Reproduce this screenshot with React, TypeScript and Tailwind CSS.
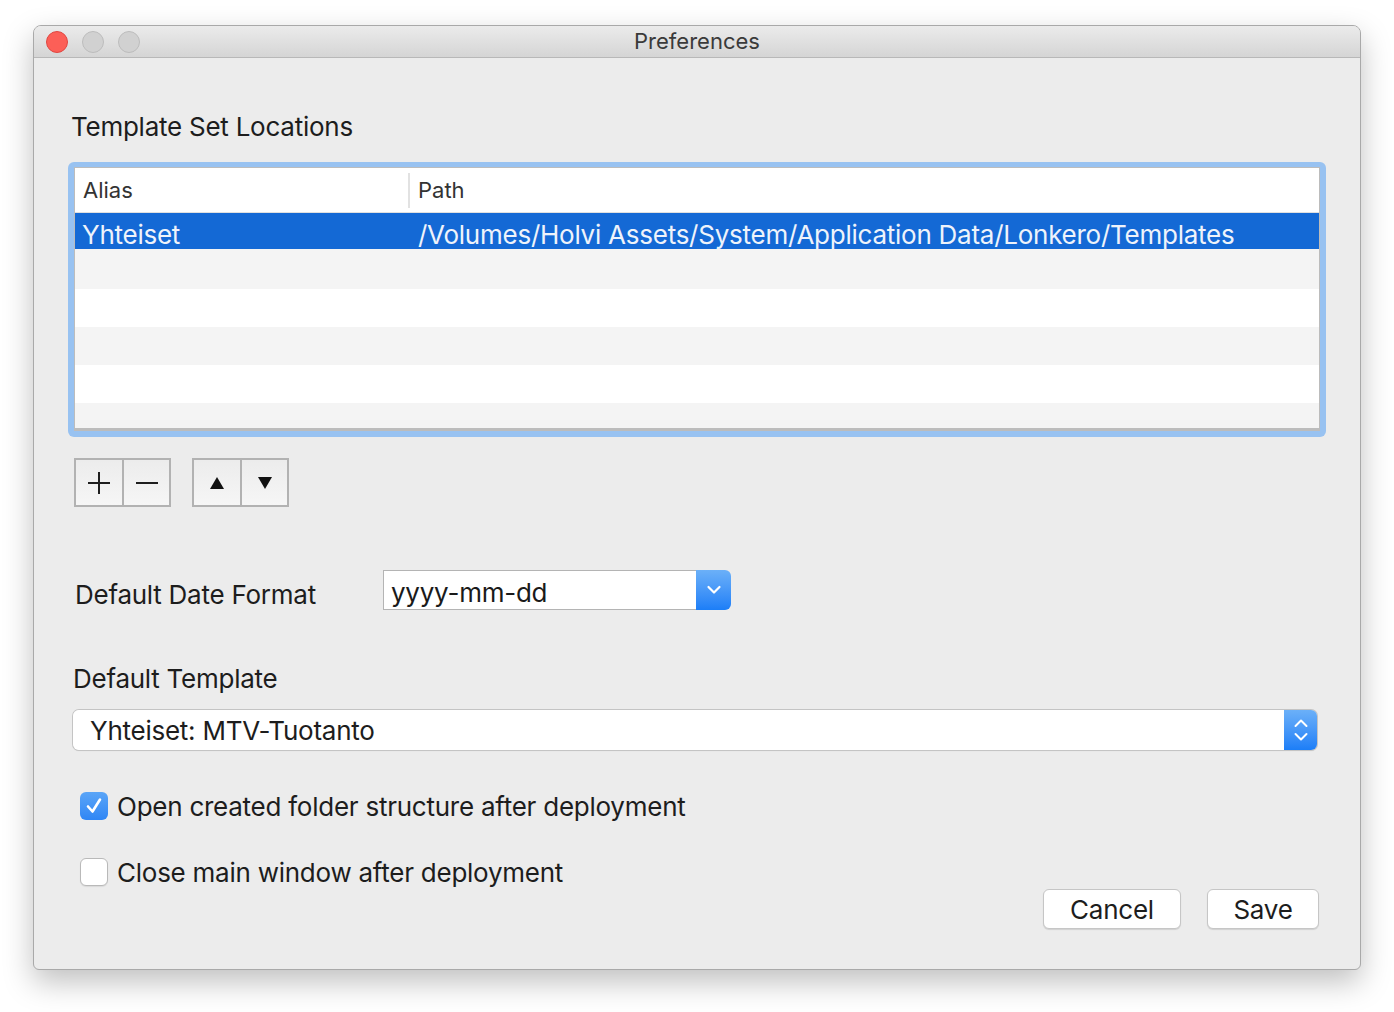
import React from 'react';

const font = { fontFamily: 'Inter, "Liberation Sans", sans-serif' };

function ChevronDown() {
  return (
    <svg width="16" height="12" viewBox="0 0 16 12">
      <path d="M2.5 3 L8 8.5 L13.5 3" fill="none" stroke="white" strokeWidth="2.2" strokeLinecap="round" strokeLinejoin="round" />
    </svg>
  );
}

function UpDown() {
  return (
    <svg width="16" height="26" viewBox="0 0 16 26">
      <path d="M2.5 9 L8 3.5 L13.5 9" fill="none" stroke="white" strokeWidth="2" strokeLinecap="round" strokeLinejoin="round" />
      <path d="M2.5 17 L8 22.5 L13.5 17" fill="none" stroke="white" strokeWidth="2" strokeLinecap="round" strokeLinejoin="round" />
    </svg>
  );
}

function Light({ red }: { red?: boolean }) {
  return (
    <div
      className={
        red
          ? 'w-[22px] h-[22px] rounded-full bg-[#fc5f57] border border-[#df4741]'
          : 'w-[22px] h-[22px] rounded-full bg-[#d1d1d1] border border-[#bcbcbc]'
      }
    />
  );
}

function SegButton({ children, first }: { children: React.ReactNode; first?: boolean }) {
  return (
    <div
      className={
        'h-full flex items-center justify-center bg-gradient-to-b from-[#ececec] to-[#f6f6f6] ' +
        (first ? 'w-[48px] border-r-2 border-[#b2b2b2]' : 'w-[45px]')
      }
    >
      {children}
    </div>
  );
}

const rows = ['bg-[#f4f4f4] h-[40px]', 'bg-white h-[38px]', 'bg-[#f4f4f4] h-[38px]', 'bg-white h-[38px]', 'bg-[#f4f4f4] h-[26px]'];

export default function App() {
  return (
    <div className="min-h-screen bg-white pt-[25px] pl-[33px] text-[#1d1d1d]" style={font}>
      <div className="w-[1328px] h-[945px] rounded-t-[8px] rounded-b-[6px] border border-[#a9a9a9] bg-[#ececec] shadow-[0_12px_30px_rgba(0,0,0,0.25)] overflow-hidden flex flex-col">
        {/* title bar */}
        <div className="relative h-[32px] shrink-0 bg-gradient-to-b from-[#ebebeb] to-[#d5d5d5] border-b border-[#b8b8b8] flex items-center pl-[12px] gap-[14px]">
          <Light red />
          <Light />
          <Light />
          <div className="absolute inset-0 flex items-center justify-center text-[22px] text-[#3a3a3a]">Preferences</div>
        </div>

        <div className="px-[34px] pt-[53px] flex flex-col tracking-[-0.25px]">
          <div className="ml-[3px] text-[26px] leading-[31px]">Template Set Locations</div>

          {/* table */}
          <div className="mt-[20px] h-[275px] rounded-[6px] bg-[#98c2f1] p-[6px] pt-[5px]">
            <div className="h-full border border-[#bcbcbc] border-b-[3px] bg-white flex flex-col overflow-hidden">
              <div className="h-[45px] shrink-0 flex items-center border-b border-[#e0e0e0] text-[22px] text-[#333] tracking-normal">
                <div className="w-[335px] h-[35px] pl-[8px] flex items-center border-r-2 border-[#e2e2e2]">Alias</div>
                <div className="pl-[8px]">Path</div>
              </div>
              <div className="h-[36px] shrink-0 flex items-center pt-[7px] bg-[#1469d5] text-[26px] text-[#eef3fb]">
                <div className="w-[336px] pl-[7px]">Yhteiset</div>
                <div className="pl-[7px]">/Volumes/Holvi Assets/System/Application Data/Lonkero/Templates</div>
              </div>
              {rows.map((r, i) => (
                <div key={i} className={'shrink-0 ' + r} />
              ))}
            </div>
          </div>

          {/* +/- and arrows */}
          <div className="mt-[21px] ml-[6px] flex gap-[21px]">
            <div className="h-[49px] flex border-2 border-[#b2b2b2]">
              <SegButton first>
                <svg width="24" height="24" viewBox="0 0 24 24">
                  <path d="M12 1 V23 M1 12 H23" stroke="#1e1e1e" strokeWidth="2" />
                </svg>
              </SegButton>
              <SegButton>
                <svg width="24" height="24" viewBox="0 0 24 24">
                  <path d="M1 12 H23" stroke="#1e1e1e" strokeWidth="2" />
                </svg>
              </SegButton>
            </div>
            <div className="h-[49px] flex border-2 border-[#b2b2b2]">
              <SegButton first>
                <svg width="16" height="14" viewBox="0 0 16 14">
                  <path d="M8 1 L15 13 H1 Z" fill="#111" />
                </svg>
              </SegButton>
              <SegButton>
                <svg width="16" height="14" viewBox="0 0 16 14">
                  <path d="M1 1 H15 L8 13 Z" fill="#111" />
                </svg>
              </SegButton>
            </div>
          </div>

          {/* date format */}
          <div className="mt-[63px] ml-[7px] flex items-start">
            <div className="w-[308px] mt-[9px] leading-[31px] text-[26px]">Default Date Format</div>
            <div className="flex h-[40px] w-[348px]">
              <div className="flex-1 bg-white border border-[#b4b4b4] border-r-0 flex items-center pl-[7px] pt-[4px] text-[26px] text-[#1a1a1a]">yyyy-mm-dd</div>
              <div className="w-[35px] rounded-r-[6px] bg-gradient-to-b from-[#6bb0f8] to-[#1b7ef7] flex items-center justify-center">
                <ChevronDown />
              </div>
            </div>
          </div>

          {/* default template */}
          <div className="mt-[53px] ml-[5px] text-[26px] leading-[31px]">Default Template</div>
          <div className="mt-[16px] ml-[5px] w-[1244px] h-[40px] flex rounded-[6px] shadow-[0_0_0_1px_#c4c4c4,0_1px_1px_rgba(0,0,0,0.15)]">
            <div className="flex-1 bg-white rounded-l-[6px] flex items-center pl-[17px] text-[26px]">Yhteiset: MTV-Tuotanto</div>
            <div className="w-[33px] rounded-r-[6px] bg-gradient-to-b from-[#6bb0f8] to-[#1b7ef7] flex items-center justify-center">
              <UpDown />
            </div>
          </div>

          {/* checkboxes + buttons */}
          <div className="mt-[42px] flex justify-between">
            <div className="ml-[12px] flex flex-col gap-[38px]">
              <div className="flex items-center gap-[9px] h-[28px]">
                <div className="w-[28px] h-[28px] rounded-[6px] bg-gradient-to-b from-[#5aa5f7] to-[#2f86f5] flex items-center justify-center">
                  <svg width="20" height="20" viewBox="0 0 20 20">
                    <path d="M4 10.5 L8.5 15.5 L16 3.5" fill="none" stroke="white" strokeWidth="2.6" strokeLinecap="round" strokeLinejoin="round" />
                  </svg>
                </div>
                <span className="text-[26px]">Open created folder structure after deployment</span>
              </div>
              <div className="flex items-center gap-[9px] h-[28px]">
                <div className="w-[28px] h-[28px] rounded-[6px] bg-white border border-[#b9b9b9] shadow-[0_1px_1px_rgba(0,0,0,0.08)]" />
                <span className="text-[26px]">Close main window after deployment</span>
              </div>
            </div>
            <div className="mt-[97px] mr-[7px] flex gap-[26px]">
              <div className="w-[138px] h-[40px] rounded-[6px] bg-white border border-[#c6c6c6] shadow-[0_1px_1px_rgba(0,0,0,0.12)] flex items-center justify-center text-[26px]">Cancel</div>
              <div className="w-[112px] h-[40px] rounded-[6px] bg-white border border-[#c6c6c6] shadow-[0_1px_1px_rgba(0,0,0,0.12)] flex items-center justify-center text-[26px]">Save</div>
            </div>
          </div>
        </div>
      </div>
    </div>
  );
}
